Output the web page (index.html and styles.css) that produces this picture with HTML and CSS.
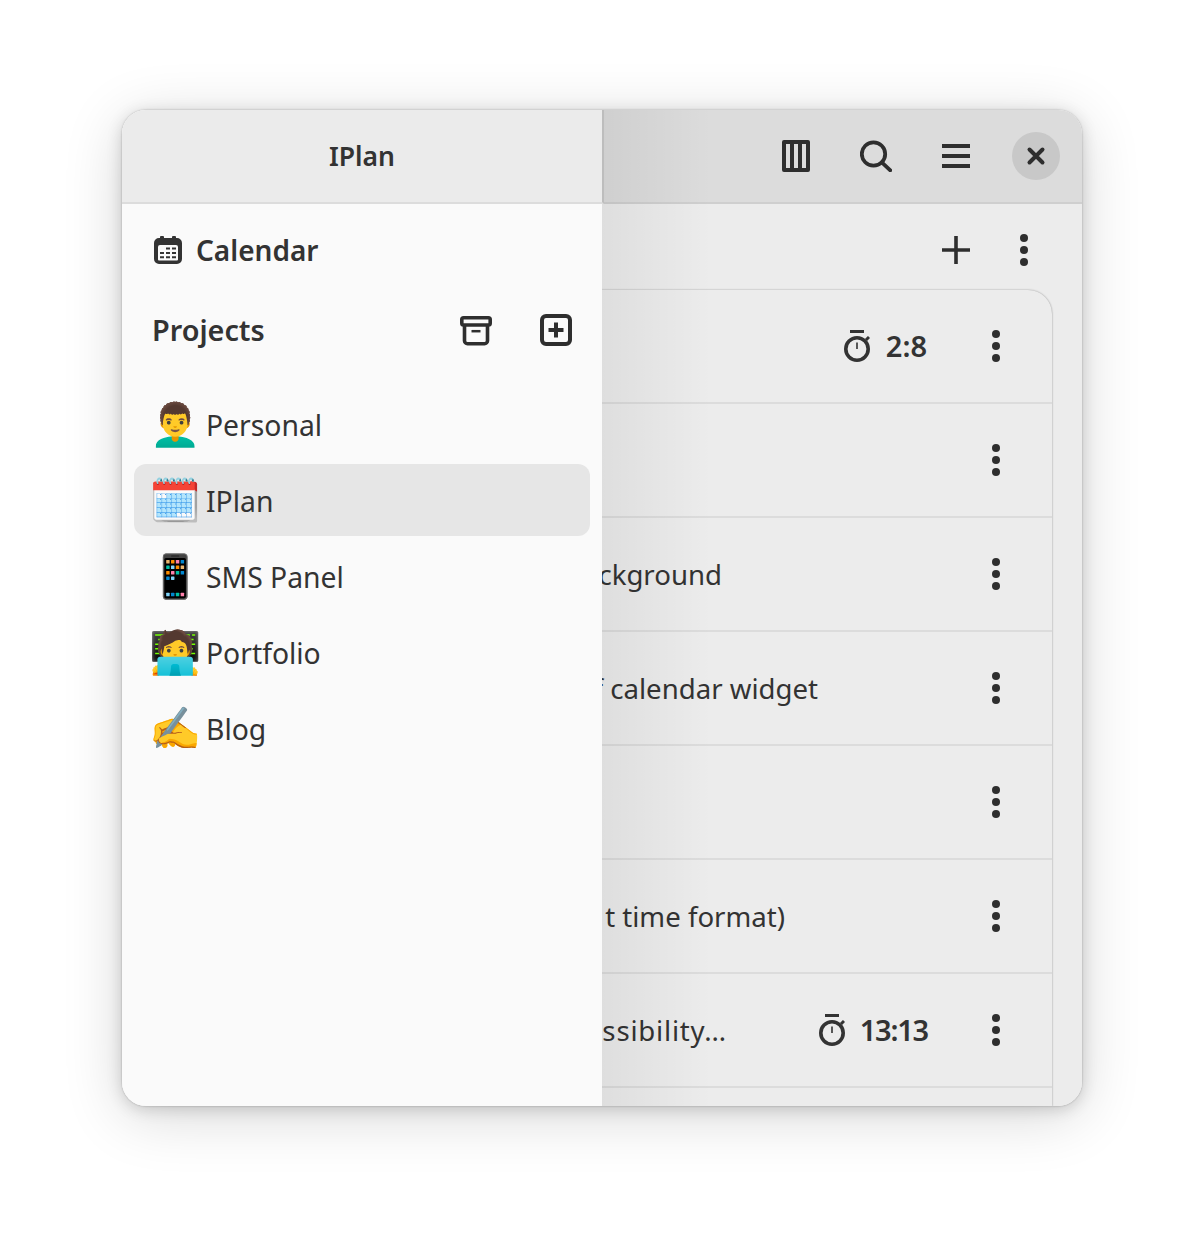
FILE: index.html
```html
<!DOCTYPE html>
<html lang="en">
<head>
<meta charset="utf-8">
<title>IPlan</title>
<link rel="stylesheet" href="styles.css">
</head>
<body>
<div class="window">
  <main class="main">
    <header class="main-header">
      <svg class="icon" viewBox="0 0 32 32"><path fill="currentColor" fill-rule="evenodd" d="M4 0h24a2 2 0 0 1 2 2v28a2 2 0 0 1-2 2H4a2 2 0 0 1-2-2V2a2 2 0 0 1 2-2zM6 4v24h4V4zM14 4v24h4V4zM22 4v24h4V4z"/></svg>
      <svg class="icon" viewBox="0 0 32 32"><circle cx="13.500" cy="14" r="11.700" fill="none" stroke="currentColor" stroke-width="3.800"/><path d="M21.800 22.300 30.300 30.300" fill="none" stroke="currentColor" stroke-width="3.800" stroke-linecap="round"/></svg>
      <svg class="icon" viewBox="0 0 32 32"><path d="M2 6h28M2 16h28M2 26h28" fill="none" stroke="currentColor" stroke-width="4.200"/></svg>
      <button class="close"><svg viewBox="0 0 20 20"><path d="M3.500 3.500l13 13M16.500 3.500l-13 13" fill="none" stroke="currentColor" stroke-width="4" stroke-linecap="round"/></svg></button>
    </header>
    <div class="main-tools">
      <svg class="icon" viewBox="0 0 32 32"><path d="M16 2v28M2 16h28" fill="none" stroke="currentColor" stroke-width="3.600"/></svg>
      <svg class="dots" viewBox="0 0 8 32"><use href="#dots3"/></svg>
    </div>
    <section class="tasks">
      <div class="task"><span class="time"><svg class="watch" viewBox="0 0 26 32"><use href="#stopwatch"/></svg><span>2:8</span></span><svg class="dots" viewBox="0 0 8 32"><use href="#dots3"/></svg></div>
      <div class="task"><svg class="dots" viewBox="0 0 8 32"><use href="#dots3"/></svg></div>
      <div class="task"><span class="name n-bg">ckground</span><svg class="dots" viewBox="0 0 8 32"><use href="#dots3"/></svg></div>
      <div class="task"><span class="name n-cal">f calendar widget</span><svg class="dots" viewBox="0 0 8 32"><use href="#dots3"/></svg></div>
      <div class="task"><svg class="dots" viewBox="0 0 8 32"><use href="#dots3"/></svg></div>
      <div class="task"><span class="name n-fmt">t time format)</span><svg class="dots" viewBox="0 0 8 32"><use href="#dots3"/></svg></div>
      <div class="task"><span class="name n-acc">ssibility…</span><span class="time wide"><svg class="watch" viewBox="0 0 26 32"><use href="#stopwatch"/></svg><span>13:13</span></span><svg class="dots" viewBox="0 0 8 32"><use href="#dots3"/></svg></div>
      <div class="task"></div>
    </section>
    <div class="dim"></div>
  </main>
  <aside class="sidebar">
    <header class="side-header">IPlan</header>
    <div class="side-body">
      <div class="calendar">
        <svg class="cal-icon" viewBox="0 0 28 28"><path fill-rule="evenodd" d="M6 1a1 1 0 0 1 1-1h2a1 1 0 0 1 1 1v1h8V1a1 1 0 0 1 1-1h2a1 1 0 0 1 1 1v1h1a5 5 0 0 1 5 5v16a5 5 0 0 1-5 5H5a5 5 0 0 1-5-5V7a5 5 0 0 1 5-5h1zM6 9a2 2 0 0 0-2 2v12.500a1 1 0 0 0 1 1h18a1 1 0 0 0 1-1V11a2 2 0 0 0-2-2z" fill="#333"/><path d="M12 11.500h4v2h-4zM18 11.500h4v2h-4zM6 16h4v2H6zM12 16h4v2h-4zM18 16h4v2h-4zM6 20.300h4v2H6zM12 20.300h4v2h-4zM18 20.300h4v2h-4z" fill="#333"/></svg>
        <span>Calendar</span>
      </div>
      <div class="projects-head">
        <span class="projects-title">Projects</span>
        <svg class="icon" viewBox="0 0 32 32"><rect x="1.800" y="3.800" width="28.400" height="7.200" rx="1.800" fill="none" stroke="currentColor" stroke-width="3.600"/><path d="M4.500 12v14.700a3 3 0 0 0 3 3h17a3 3 0 0 0 3-3V12" fill="none" stroke="currentColor" stroke-width="3.600"/><path d="M11.500 17.200h9" stroke="currentColor" stroke-width="2.500"/></svg>
        <svg class="icon" viewBox="0 0 32 32"><rect x="2" y="2" width="28" height="28" rx="4" fill="none" stroke="currentColor" stroke-width="4"/><path d="M16 8.500v15M8.500 16h15" stroke="currentColor" stroke-width="4"/></svg>
      </div>
      <ul class="projects">
        <li class="project"><span class="emoji">👨‍🦱</span>Personal</li>
        <li class="project selected"><span class="emoji">🗓️</span>IPlan</li>
        <li class="project"><span class="emoji">📱</span>SMS Panel</li>
        <li class="project"><span class="emoji">🧑‍💻</span>Portfolio</li>
        <li class="project"><span class="emoji">✍️</span>Blog</li>
      </ul>
    </div>
  </aside>
</div>
<svg class="defs" aria-hidden="true">
  <symbol id="dots3" viewBox="0 0 8 32"><circle cx="4" cy="4" r="4"/><circle cx="4" cy="16" r="4"/><circle cx="4" cy="28" r="4"/></symbol>
  <symbol id="stopwatch" viewBox="0 0 26 32"><path d="M6 1.500h14" stroke="currentColor" stroke-width="3" fill="none"/><circle cx="13" cy="19" r="11.200" fill="none" stroke="currentColor" stroke-width="3.600"/><path d="M13 12.500v6.500" stroke="currentColor" stroke-width="1.600" fill="none"/><path d="M22 10l3-3" stroke="currentColor" stroke-width="3" fill="none"/></symbol>
</svg>
</body>
</html>
```
FILE: styles.css
```css
* { box-sizing: border-box; }
html, body { margin: 0; height: 100%; }
body {
  background: #fff;
  padding: 110px 122px 134px;
  font-family: "Noto Sans", sans-serif;
  color: #333;
  height: 1240px;
  overflow: hidden;
}
body::before {
  content: "";
  position: absolute;
  left: 122px; top: 110px;
  width: 960px; height: 996px;
  border-radius: 24px;
  box-shadow: 0 0 2px rgba(0,0,0,.3), 0 3px 16px rgba(0,0,0,.16), 0 10px 60px rgba(0,0,0,.16);
}
.defs { display: none; }
.window {
  position: relative;
  height: 996px;
  border-radius: 24px;
  overflow: hidden;
  background: #ececec;
}
.icon { width: 32px; height: 32px; color: #2e2e2e; flex: none; display: block; }
.dots { width: 8px; height: 32px; fill: #2e2e2e; flex: none; display: block; }
.main { height: 100%; display: flex; flex-direction: column; }
.main-header {
  height: 94px;
  flex: none;
  display: flex;
  align-items: center;
  justify-content: flex-end;
  gap: 48px;
  padding-right: 22px;
  background: #dcdcdc;
  border-bottom: 2px solid #cfcfcf;
}
.close {
  width: 48px; height: 48px;
  border: 0; padding: 14px;
  border-radius: 50%;
  background: #c8c8c8;
  color: #2e2e2e;
  margin-left: -8px;
}
.close svg { display: block; width: 20px; height: 20px; }
.main-tools {
  height: 86px; flex: none;
  display: flex; align-items: center; justify-content: flex-end;
  gap: 48px;
  padding: 6px 54px 0 0;
}
.tasks {
  margin: 0 30px 0 40px;
  flex: 1;
  min-height: 0;
  overflow: hidden;
  background: #ececec;
  border-radius: 24px 24px 0 0;
  box-shadow: 0 0 2px rgba(0,0,0,.35), 0 1px 2px rgba(0,0,0,.1);
}
.task {
  height: 114px;
  display: flex; align-items: center; justify-content: flex-end;
  border-bottom: 2px solid #dcdcdc;
  padding-right: 52px;
  font-size: 27.600px;
}
.name { flex: none; white-space: nowrap; text-align: right; margin-right: auto; }
.n-bg { width: 560px; }
.n-cal { width: 656px; }
.n-fmt { width: 623px; }
.n-acc { width: 565px; letter-spacing: .8px; }
.time { display: flex; align-items: center; font-size: 29px; font-weight: 600; margin-right: 65px; gap: 16px; }
.time span { margin-top: -2px; }
.time.wide { margin-right: 64px; gap: 15px; letter-spacing: -1.200px; }
.watch { width: 26px; height: 32px; }
.dim {
  position: absolute;
  left: 480px; top: 0; bottom: 0;
  width: 110px;
  background: linear-gradient(to right, rgba(0,0,0,.06), rgba(0,0,0,0));
}
.sidebar {
  position: absolute;
  left: 0; top: 0; bottom: 0;
  width: 480px;
  background: #fafafa;
  display: flex; flex-direction: column;
}
.side-header {
  height: 94px; flex: none;
  margin-right: -2px;
  display: flex; align-items: center; justify-content: center;
  background: #ebebeb;
  border-bottom: 2px solid #dcdcdc;
  border-right: 2px solid #bdbdbd;
  font-size: 26.500px; font-weight: 600;
}
.side-body { padding: 12px; }
.calendar {
  display: flex; align-items: center; gap: 14px;
  height: 68px;
  padding-left: 20px;
  font-size: 28px; font-weight: 600;
}
.cal-icon { width: 28px; height: 28px; }
.projects-head {
  display: flex; align-items: center; gap: 48px;
  height: 92px;
  padding: 0 18px;
  font-size: 28.800px; font-weight: 600;
}
.projects-title { flex: 1; margin-top: -2px; }
.projects { list-style: none; margin: 12px 0 0; padding: 0; display: flex; flex-direction: column; gap: 4px; }
.project {
  height: 72px;
  display: flex; align-items: center; gap: 11px;
  padding: 2px 0 0 15px;
  border-radius: 12px;
  font-size: 28.300px;
}
.project.selected { background: #e6e6e6; }
.emoji { font-size: 42px; line-height: 1; width: 46px; text-align: center; margin-top: -4px; }
```
